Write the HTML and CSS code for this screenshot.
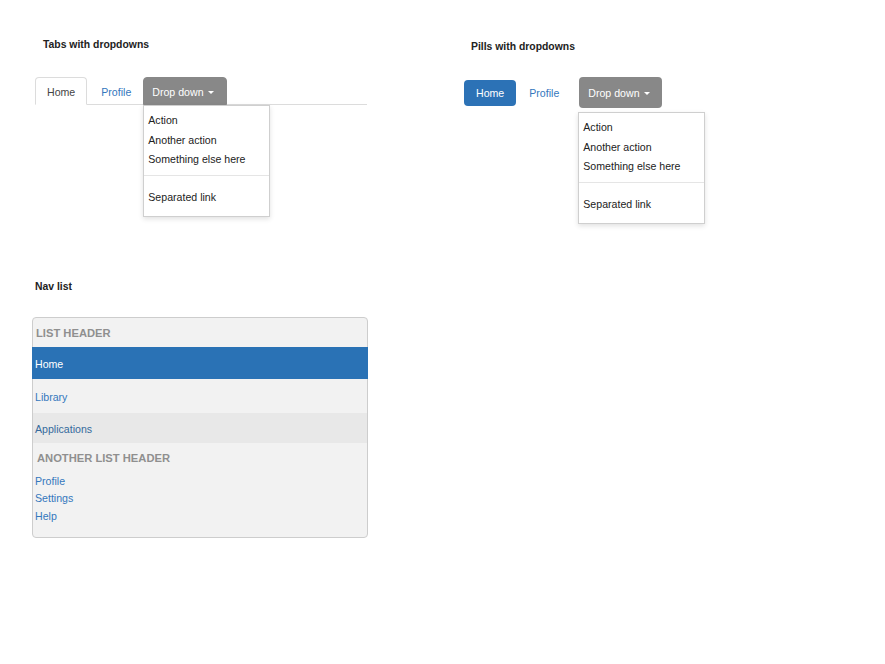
FILE: index.html
```html
<!DOCTYPE html>
<html>
<head>
<meta charset="utf-8">
<link rel="stylesheet" href="styles.css">
</head>
<body>
<div class="page">
  <div class="top-row">
    <section class="col col-tabs">
      <h3 class="heading">Tabs with dropdowns</h3>
      <ul class="tabs">
        <li class="tab active"><a>Home</a></li>
        <li class="tab"><a class="link">Profile</a></li>
        <li class="tab dropdown open">
          <a class="toggle">Drop down <span class="caret"></span></a>
          <ul class="menu">
            <li><a>Action</a></li>
            <li><a>Another action</a></li>
            <li><a>Something else here</a></li>
            <li class="divider"></li>
            <li><a>Separated link</a></li>
          </ul>
        </li>
      </ul>
    </section>
    <section class="col col-pills">
      <h3 class="heading">Pills with dropdowns</h3>
      <ul class="pills">
        <li class="pill active"><a>Home</a></li>
        <li class="pill"><a class="link">Profile</a></li>
        <li class="pill dropdown open">
          <a class="toggle">Drop down <span class="caret"></span></a>
          <ul class="menu">
            <li><a>Action</a></li>
            <li><a>Another action</a></li>
            <li><a>Something else here</a></li>
            <li class="divider"></li>
            <li><a>Separated link</a></li>
          </ul>
        </li>
      </ul>
    </section>
  </div>
  <section class="navlist-section">
    <h3 class="heading heading-nav">Nav list</h3>
    <ul class="navlist">
      <li class="nav-header">List header</li>
      <li class="nav-item active"><a>Home</a></li>
      <li class="nav-item lib"><a class="link">Library</a></li>
      <li class="nav-item hover"><a class="link-dark">Applications</a></li>
      <li class="nav-header second">Another list header</li>
      <li class="nav-small"><a class="link">Profile</a></li>
      <li class="nav-small"><a class="link">Settings</a></li>
      <li class="nav-small"><a class="link">Help</a></li>
    </ul>
  </section>
</div>
</body>
</html>
```

FILE: styles.css
```css
* { box-sizing: border-box; }
html, body { margin: 0; padding: 0; background: #fff; }
body {
  font-family: "Liberation Sans", Arial, Helvetica, sans-serif;
  font-size: 10.6px;
  color: #333;
}
ul { list-style: none; margin: 0; padding: 0; }
a { cursor: pointer; }
.page { padding-top: 38px; }

.top-row { display: flex; height: 242px; }
.col-tabs { margin-left: 35px; width: 429px; }
.col-pills { padding-top: 2px; }

.heading {
  margin: 0;
  font-size: 10.4px;
  line-height: 14px;
  font-weight: bold;
  color: #222;
}
.col-tabs .heading { margin-left: 8px; margin-bottom: 25px; }
.col-pills .heading { margin-left: 7px; margin-bottom: 23px; }

.link { color: #3477bd; }
.link-dark { color: #356a9c; }

/* Tabs */
.tabs {
  display: flex;
  width: 332px;
  border-bottom: 1px solid #dcdcdc;
  height: 28px;
}
.tab { position: relative; margin-right: 2px; margin-bottom: -1px; }
.tab > a {
  display: flex;
  align-items: center;
  height: 28px;
  padding: 1px 11px 0 11px;
  border: 1px solid transparent;
  border-radius: 4px 4px 0 0;
}
.tab.active > a {
  background: #fff;
  color: #444;
  border-color: #dcdcdc;
  border-bottom-color: #fff;
}
.tab.dropdown { margin-left: -2px; }
.toggle {
  background: #888;
  color: #fff;
  display: flex;
  align-items: center;
  gap: 4px;
}
.tab > a.toggle {
  padding: 1px 12px 0 8px;
  border-color: #888;
  height: 28px;
}
.caret {
  display: inline-block;
  width: 0;
  height: 0;
  border-top: 3px solid #fff;
  border-left: 3.5px solid transparent;
  border-right: 3.5px solid transparent;
  margin-top: 1px;
}

/* Dropdown menus */
.menu {
  position: absolute;
  left: 0;
  width: 127px;
  background: #fff;
  border: 1px solid #cfcfcf;
  box-shadow: 0 2px 5px rgba(0,0,0,0.12);
  padding: 5px 0 9px;
  z-index: 5;
}
.tab .menu { top: 28px; }
.menu li a {
  display: block;
  padding: 0 4px;
  line-height: 19.5px;
  color: #222;
  white-space: nowrap;
}
.menu .divider {
  height: 1px;
  background: #e5e5e5;
  margin: 5px 0 12px;
}

/* Pills */
.pills { display: flex; align-items: center; height: 31px; }
.pill { position: relative; }
.pill > a {
  display: flex;
  align-items: center;
  height: 26px;
  padding: 1px 12px 0;
  border-radius: 4px;
}
.pill.active > a { background: #2c72b6; color: #fff; }
.pill + .pill { margin-left: 1px; }
.pill.dropdown { margin-left: 8px; }
.pill > a.toggle {
  height: 31px;
  padding: 1px 12px 0 9px;
}
.pill .menu { top: 35px; left: -1px; }

/* Nav list */
.navlist-section { margin-left: 32px; width: 336px; }
.heading-nav { margin-left: 3px; margin-bottom: 23px; }
.navlist {
  background: #f2f2f2;
  border: 1px solid #cdcdcd;
  border-radius: 4px;
  padding-bottom: 12px;
}
.nav-header {
  display: flex;
  align-items: center;
  height: 29px;
  padding-left: 3px;
  text-transform: uppercase;
  font-weight: bold;
  font-size: 11.2px;
  color: #8f8f8f;
}
.nav-header.second { height: 30px; padding-left: 4px; }
.nav-item a {
  display: flex;
  align-items: center;
  padding: 1px 2px 0;
}
.nav-item.active { margin: 0 -1px; }
.nav-item.active a {
  background: #2a72b5;
  color: #fff;
  height: 32px;
  padding-left: 3px;
}
.nav-item.lib a { height: 34px; padding-top: 2px; }
.nav-item.hover a { background: #e8e8e8; height: 30px; }
.nav-small a {
  display: block;
  padding-left: 2px;
  line-height: 17.3px;
}
```
